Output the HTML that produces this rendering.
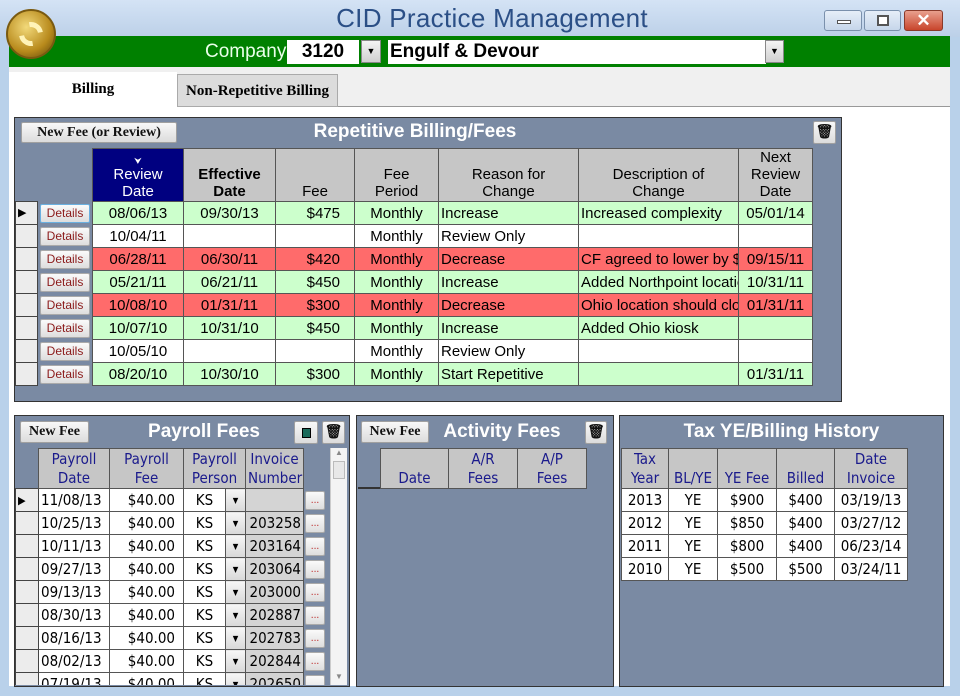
<!DOCTYPE html>
<html><head><meta charset="utf-8"><style>
*{box-sizing:border-box;margin:0;padding:0}
body{width:960px;height:696px;overflow:hidden;background:#b9d1ea;font-family:"Liberation Sans",sans-serif;position:relative}
.a{position:absolute}
.btn{position:absolute;background:linear-gradient(#f8f8f8,#dcdcdc);border:1px solid #a0a0a0;border-radius:2px;font-family:"Liberation Serif",serif;font-weight:bold;font-size:14px;color:#111;text-align:center}
table{border-collapse:collapse;table-layout:fixed;position:absolute}
td{border:1px solid #555;overflow:hidden;white-space:nowrap;padding:0 2px}
.panel{position:absolute;background:#7a8aa3;border:1px solid #333}
.ttl{position:absolute;color:#fff;font-weight:bold;font-size:19px;text-align:center}
.hd td{background:#c6c6c6;text-align:center;line-height:17px;vertical-align:bottom;padding-bottom:1px}
.g td{background:#ccffcc}.w td{background:#fff}.r td{background:#ff6b6b}
.rt td{height:23px;font-size:15px;line-height:21px}
.sel{background:#ececec!important;border-color:#444}
.det{background:#7a8aa3!important;border:none!important;padding:1px 2px!important}
.det span{display:block;background:linear-gradient(#fafafa,#dedede);border:1px solid #aaa;border-radius:2px;color:#8b1a1a;font-size:12px;line-height:17px;text-align:center}
.c{text-align:center}.rr{text-align:right;padding-right:14px}
.pt td{font-family:"DejaVu Sans Condensed","Liberation Sans",sans-serif;font-size:15px;height:23px;line-height:21px;background:#fff}
.pt td.rr{padding-right:8px}
.ph td{color:#1a1a8c;font-family:"DejaVu Sans Condensed","Liberation Sans",sans-serif;font-size:15px;background:#c6c6c6;text-align:center;line-height:19px;vertical-align:bottom}
.dd{background:linear-gradient(#f6f6f6,#d8d8d8)!important;text-align:center;font-size:8px!important;padding:0!important}
.inv{background:#d4d4d4!important;text-align:right}
.dots{background:#7a8aa3!important;border:none!important;padding:1px 1px!important}
.dots span{display:block;background:linear-gradient(#fafafa,#dedede);border:1px solid #aaa;border-radius:2px;color:#b22;font-size:10px;line-height:17px;text-align:center;width:20px}
</style></head><body>
<div class="a" style="left:0;top:0;width:960px;height:37px;background:linear-gradient(#d4e3f5,#bcd0e8)"></div>
<div class="a" style="left:0;top:3px;width:984px;text-align:center;font-size:26px;color:#2b4f86;letter-spacing:0.3px">CID Practice Management</div>
<div class="a" style="left:824px;top:10px;width:38px;height:21px;border:1px solid #7a90ac;border-radius:3px;background:linear-gradient(#e6eef8,#c6d6ea)"><div class="a" style="left:12px;top:9px;width:14px;height:4px;background:#fff;border:1px solid #555"></div></div>
<div class="a" style="left:864px;top:10px;width:37px;height:21px;border:1px solid #7a90ac;border-radius:3px;background:linear-gradient(#e6eef8,#c6d6ea)"><div class="a" style="left:12px;top:4px;width:12px;height:11px;border:2px solid #555;background:#fff"></div></div>
<div class="a" style="left:904px;top:10px;width:39px;height:21px;border:1px solid #8a3a2a;border-radius:3px;background:linear-gradient(#e9a08e,#c8452c);color:#fff;font-weight:bold;font-size:17px;text-align:center;line-height:20px">✕</div>
<div class="a" style="left:6px;top:9px;width:50px;height:50px;border-radius:50%;background:radial-gradient(circle at 40% 35%,#f2d97a,#b88a1c 60%,#5a420a);border:2px solid #7a5a10;z-index:3"><div class="a" style="left:11px;top:11px;width:24px;height:24px;border-radius:50%;border:5px solid #fff3b8;border-left-color:transparent;border-right-color:transparent;transform:rotate(35deg)"></div></div>
<div class="a" style="left:9px;top:36px;width:941px;height:31px;background:#008000"></div>
<div class="a" style="left:205px;top:41px;color:#eaffea;font-size:19px">Company</div>
<div class="a" style="left:287px;top:40px;width:72px;height:24px;background:#fff;font-weight:bold;font-size:19px;text-align:center;line-height:24px">3120</div>
<div class="a" style="left:361px;top:40px;width:20px;height:23px;background:linear-gradient(#f4f4f4,#d0d0d0);border:1px solid #888;font-size:9px;text-align:center;line-height:21px">▼</div>
<div class="a" style="left:388px;top:40px;width:378px;height:24px;background:#fff;font-weight:bold;font-size:19px;line-height:24px;padding-left:2px">Engulf &amp; Devour</div>
<div class="a" style="left:765px;top:40px;width:19px;height:23px;background:linear-gradient(#f4f4f4,#d0d0d0);border:1px solid #888;font-size:9px;text-align:center;line-height:21px">▼</div>
<div class="a" style="left:9px;top:67px;width:941px;height:40px;background:#f0f0f0;border-bottom:1px solid #999"></div>
<div class="a" style="left:9px;top:72px;width:168px;height:35px;background:#fff;font-family:'Liberation Serif',serif;font-weight:bold;font-size:15px;text-align:center;line-height:34px">Billing</div>
<div class="a" style="left:177px;top:74px;width:161px;height:33px;background:#dcdcdc;border:1px solid #aaa;font-family:'Liberation Serif',serif;font-weight:bold;font-size:15px;text-align:center;line-height:32px">Non-Repetitive Billing</div>
<div class="a" style="left:9px;top:107px;width:941px;height:579px;background:#fff"></div>
<div class="panel" style="left:14px;top:117px;width:828px;height:285px"></div>
<div class="btn" style="left:21px;top:122px;width:156px;height:21px;line-height:19px">New Fee (or Review)</div>
<div class="ttl" style="left:200px;top:121px;width:430px">Repetitive Billing/Fees</div>
<div class="btn" style="left:813px;top:121px;width:23px;height:23px;font-size:14px;line-height:21px">🗑</div>
<table style="left:15px;top:148px;width:797px">
<colgroup><col style="width:22px"><col style="width:55px"><col style="width:91px"><col style="width:92px"><col style="width:79px"><col style="width:84px"><col style="width:140px"><col style="width:160px"><col style="width:74px"></colgroup>
<tr class="hd" style="height:53px;font-size:15px"><td style="background:#7a8aa3;border:none"></td><td style="background:#7a8aa3;border:none"></td><td style="background:#000080;color:#fff"><span style="font-size:9px;line-height:9px;display:block">⮟</span>Review<br>Date</td><td style="font-weight:bold">Effective<br>Date</td><td>Fee</td><td>Fee<br>Period</td><td>Reason for<br>Change</td><td>Description of<br>Change</td><td>Next<br>Review<br>Date</td></tr>
<tr class="rt g"><td class="sel" style="font-size:11px">▶</td><td class="det"><span style="border-color:#6ab0e0">Details</span></td><td class="c">08/06/13</td><td class="c">09/30/13</td><td class="rr">$475</td><td class="c">Monthly</td><td>Increase</td><td>Increased complexity</td><td class="c">05/01/14</td></tr>
<tr class="rt w"><td class="sel"></td><td class="det"><span>Details</span></td><td class="c">10/04/11</td><td></td><td></td><td class="c">Monthly</td><td>Review Only</td><td></td><td></td></tr>
<tr class="rt r"><td class="sel"></td><td class="det"><span>Details</span></td><td class="c">06/28/11</td><td class="c">06/30/11</td><td class="rr">$420</td><td class="c">Monthly</td><td>Decrease</td><td>CF agreed to lower by $</td><td class="c">09/15/11</td></tr>
<tr class="rt g"><td class="sel"></td><td class="det"><span>Details</span></td><td class="c">05/21/11</td><td class="c">06/21/11</td><td class="rr">$450</td><td class="c">Monthly</td><td>Increase</td><td>Added Northpoint location</td><td class="c">10/31/11</td></tr>
<tr class="rt r"><td class="sel"></td><td class="det"><span>Details</span></td><td class="c">10/08/10</td><td class="c">01/31/11</td><td class="rr">$300</td><td class="c">Monthly</td><td>Decrease</td><td>Ohio location should close</td><td class="c">01/31/11</td></tr>
<tr class="rt g"><td class="sel"></td><td class="det"><span>Details</span></td><td class="c">10/07/10</td><td class="c">10/31/10</td><td class="rr">$450</td><td class="c">Monthly</td><td>Increase</td><td>Added Ohio kiosk</td><td></td></tr>
<tr class="rt w"><td class="sel"></td><td class="det"><span>Details</span></td><td class="c">10/05/10</td><td></td><td></td><td class="c">Monthly</td><td>Review Only</td><td></td><td></td></tr>
<tr class="rt g"><td class="sel"></td><td class="det"><span>Details</span></td><td class="c">08/20/10</td><td class="c">10/30/10</td><td class="rr">$300</td><td class="c">Monthly</td><td>Start Repetitive</td><td></td><td class="c">01/31/11</td></tr>
</table>
<div class="panel" style="left:14px;top:415px;width:336px;height:272px"></div>
<div class="btn" style="left:20px;top:421px;width:69px;height:22px;line-height:20px">New Fee</div>
<div class="ttl" style="left:120px;top:421px;width:168px">Payroll Fees</div>
<div class="btn" style="left:294px;top:421px;width:24px;height:23px"><div class="a" style="left:7px;top:6px;width:9px;height:10px;background:#1a6a5a;border:1px solid #000"></div></div>
<div class="btn" style="left:322px;top:421px;width:23px;height:23px;line-height:21px">🗑</div>
<div class="a" style="left:330px;top:448px;width:17px;height:237px;background:#f4f4f4;border-left:1px solid #ccc;color:#888;font-size:8px;text-align:center">▲<div style="margin:4px 2px;height:18px;border:1px solid #bbb;background:#e8e8e8"></div><div style="position:absolute;bottom:4px;width:100%">▼</div></div>
<div class="a" style="left:15px;top:448px;width:315px;height:237px;overflow:hidden">
<table style="left:0;top:0;width:310px">
<colgroup><col style="width:23px"><col style="width:71px"><col style="width:74px"><col style="width:42px"><col style="width:20px"><col style="width:58px"><col style="width:22px"></colgroup>
<tr class="ph" style="height:40px"><td style="background:#7a8aa3;border:none"></td><td>Payroll<br>Date</td><td>Payroll<br>Fee</td><td colspan="2">Payroll<br>Person</td><td>Invoice<br>Number</td><td style="background:#7a8aa3;border:none"></td></tr>
<tr class="pt"><td class="sel" style="font-size:11px">▶</td><td>11/08/13</td><td class="rr">$40.00</td><td class="c">KS</td><td class="dd">▼</td><td class="inv"></td><td class="dots"><span>...</span></td></tr>
<tr class="pt"><td class="sel"></td><td>10/25/13</td><td class="rr">$40.00</td><td class="c">KS</td><td class="dd">▼</td><td class="inv">203258</td><td class="dots"><span>...</span></td></tr>
<tr class="pt"><td class="sel"></td><td>10/11/13</td><td class="rr">$40.00</td><td class="c">KS</td><td class="dd">▼</td><td class="inv">203164</td><td class="dots"><span>...</span></td></tr>
<tr class="pt"><td class="sel"></td><td>09/27/13</td><td class="rr">$40.00</td><td class="c">KS</td><td class="dd">▼</td><td class="inv">203064</td><td class="dots"><span>...</span></td></tr>
<tr class="pt"><td class="sel"></td><td>09/13/13</td><td class="rr">$40.00</td><td class="c">KS</td><td class="dd">▼</td><td class="inv">203000</td><td class="dots"><span>...</span></td></tr>
<tr class="pt"><td class="sel"></td><td>08/30/13</td><td class="rr">$40.00</td><td class="c">KS</td><td class="dd">▼</td><td class="inv">202887</td><td class="dots"><span>...</span></td></tr>
<tr class="pt"><td class="sel"></td><td>08/16/13</td><td class="rr">$40.00</td><td class="c">KS</td><td class="dd">▼</td><td class="inv">202783</td><td class="dots"><span>...</span></td></tr>
<tr class="pt"><td class="sel"></td><td>08/02/13</td><td class="rr">$40.00</td><td class="c">KS</td><td class="dd">▼</td><td class="inv">202844</td><td class="dots"><span>...</span></td></tr>
<tr class="pt"><td class="sel"></td><td>07/19/13</td><td class="rr">$40.00</td><td class="c">KS</td><td class="dd">▼</td><td class="inv">202650</td><td class="dots"><span>...</span></td></tr>
</table></div>
<div class="panel" style="left:356px;top:415px;width:258px;height:272px"></div>
<div class="btn" style="left:361px;top:421px;width:68px;height:22px;line-height:20px">New Fee</div>
<div class="ttl" style="left:432px;top:421px;width:140px">Activity Fees</div>
<div class="btn" style="left:585px;top:421px;width:22px;height:23px;line-height:21px">🗑</div>
<div class="a" style="left:358px;top:487px;width:22px;height:2px;background:#333"></div>
<table style="left:380px;top:448px;width:206px">
<colgroup><col style="width:68px"><col style="width:69px"><col style="width:69px"></colgroup>
<tr class="ph" style="height:40px"><td>Date</td><td>A/R<br>Fees</td><td>A/P<br>Fees</td></tr></table>
<div class="panel" style="left:619px;top:415px;width:325px;height:272px"></div>
<div class="ttl" style="left:619px;top:421px;width:325px">Tax YE/Billing History</div>
<table style="left:621px;top:448px;width:286px">
<colgroup><col style="width:47px"><col style="width:49px"><col style="width:59px"><col style="width:58px"><col style="width:73px"></colgroup>
<tr class="ph" style="height:40px"><td>Tax<br>Year</td><td>BL/YE</td><td>YE Fee</td><td>Billed</td><td>Date<br>Invoice</td></tr>
<tr class="pt"><td class="c">2013</td><td class="c">YE</td><td class="c">$900</td><td class="c">$400</td><td class="c">03/19/13</td></tr>
<tr class="pt"><td class="c">2012</td><td class="c">YE</td><td class="c">$850</td><td class="c">$400</td><td class="c">03/27/12</td></tr>
<tr class="pt"><td class="c">2011</td><td class="c">YE</td><td class="c">$800</td><td class="c">$400</td><td class="c">06/23/14</td></tr>
<tr class="pt"><td class="c">2010</td><td class="c">YE</td><td class="c">$500</td><td class="c">$500</td><td class="c">03/24/11</td></tr>
</table>
</body></html>
